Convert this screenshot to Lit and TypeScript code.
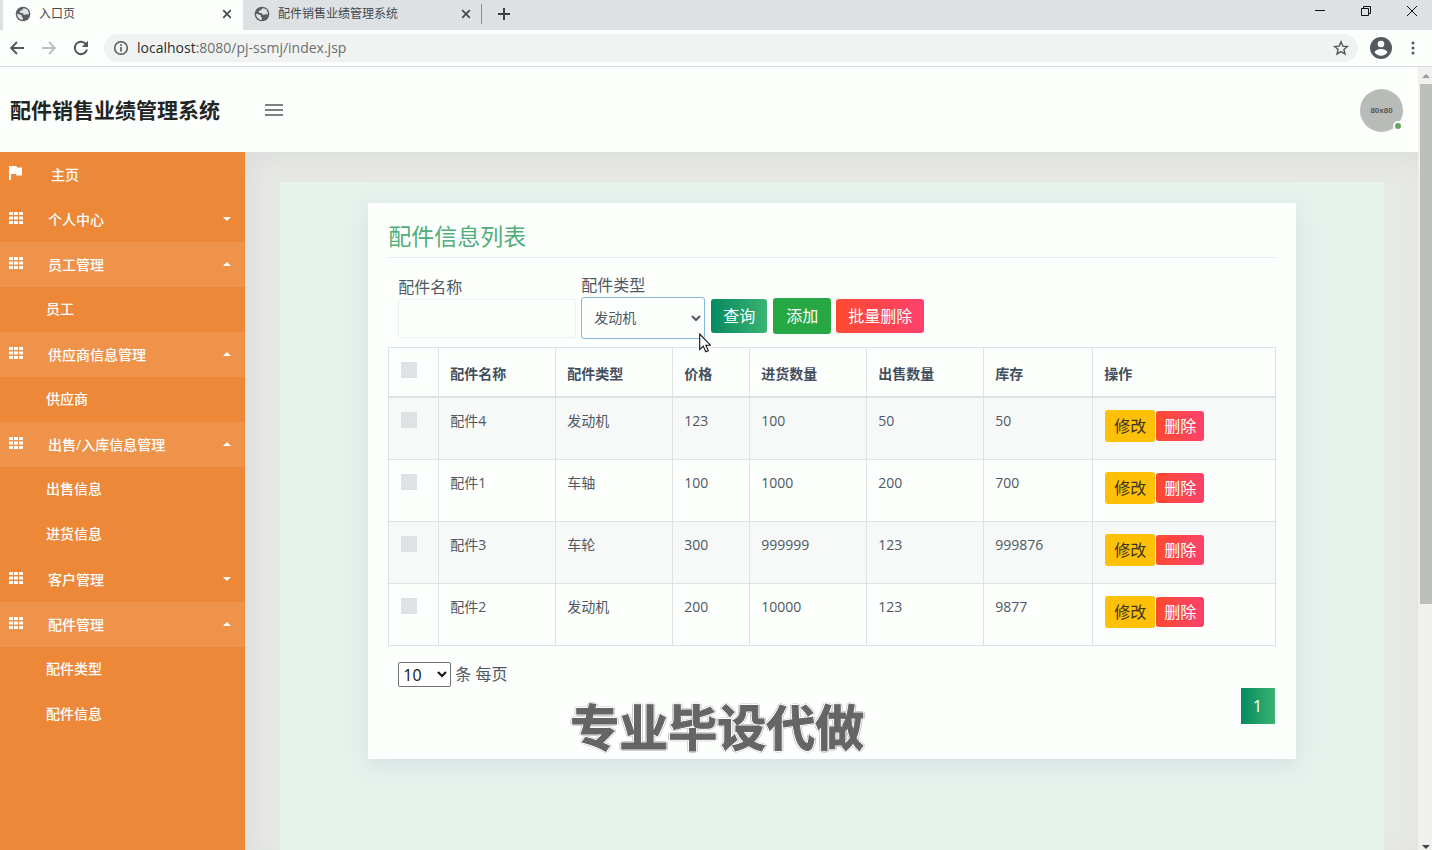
import { LitElement, html, css, svg } from "lit";
import { customElement } from "lit/decorators.js";
import { classMap } from "lit/directives/class-map.js";

const globe = html`<svg class="globe" viewBox="0 0 24 24" width="16" height="16" aria-hidden="true">
  <circle cx="12" cy="12" r="11" fill="#5a5e61" />
  <path d="M13 3.500c-2 .8-1 2.200-2.600 3-1.400.6-3.200.6-3.400 2.200-.2 1.700 2 1.700 3.700 1.900 1.900.3 1.300 2.300 3.200 2.500 2 .1 2.900-1.200 4.700-.8 1 .3 1.800 1 2 .2.700-4.600-2.600-9-7.600-9z" fill="#dfe3e5" />
  <path d="M3.200 11.500c1.800.2 4.300.8 6.200 2 1.500 1 .3 2.400 1.600 3.400 1 .8 1.300 2.300.6 3.900-4.600-.2-8.700-4.200-8.400-9.300z" fill="#dfe3e5" />
</svg>`;

const cross = html`<svg viewBox="0 0 10 10" width="10" height="10" aria-hidden="true">
  <path d="M1.200 1.200l7.600 7.600M8.800 1.200l-7.600 7.600" stroke="#45494c" stroke-width="1.700" />
</svg>`;

const gridIcon = html`<svg viewBox="0 0 14 12" width="14" height="12" aria-hidden="true">
  ${[0, 5, 10].map((x) => [0, 4.5, 9].map((y) => svg`<rect x=${x} y=${y} width="4" height="3" fill="#fff" />`))}
</svg>`;

const flagIcon = html`<svg viewBox="0 0 14 14" width="14" height="14" aria-hidden="true">
  <path d="M0 0h7.500l.5 1.600h5v8H7.500L7 8H2v6H0z" fill="#fff" />
</svg>`;

type MenuItem = { label: string; kind: "home" | "group" | "sub"; open?: boolean };

const menu: MenuItem[] = [
  { label: "主页", kind: "home" },
  { label: "个人中心", kind: "group" },
  { label: "员工管理", kind: "group", open: true },
  { label: "员工", kind: "sub" },
  { label: "供应商信息管理", kind: "group", open: true },
  { label: "供应商", kind: "sub" },
  { label: "出售/入库信息管理", kind: "group", open: true },
  { label: "出售信息", kind: "sub" },
  { label: "进货信息", kind: "sub" },
  { label: "客户管理", kind: "group" },
  { label: "配件管理", kind: "group", open: true },
  { label: "配件类型", kind: "sub" },
  { label: "配件信息", kind: "sub" },
];

@customElement("browser-bar")
class BrowserBar extends LitElement {
  static styles = css`
    :host { display: block; flex: none; font-family: "Open Sans", "Noto Sans CJK SC", sans-serif; color: #45494c; }
    * { box-sizing: border-box; }
    button { border: 0; padding: 0; background: none; display: flex; align-items: center; justify-content: center; font: inherit; }
    .strip { display: flex; height: 30px; background: #dde1e4; padding-left: 3px; overflow: hidden; }
    .tab { display: flex; align-items: center; width: 238px; padding: 0 10px 3px 11px; font-size: 12px; line-height: 18px; }
    .tab.active { width: 240px; padding-left: 12px; padding-right: 11px; background: #fdfffd; }
    .tab span { flex: 1; padding-left: 8px; }
    .sep { width: 1px; height: 20px; margin-top: 4px; background: #8d9194; }
    .plus { width: 44px; padding-bottom: 3px; }
    .window { margin-left: auto; margin-right: -3px; display: flex; }
    .window button { width: 46px; height: 22px; }
    .tools { display: flex; align-items: center; height: 37px; background: #fdfffd; border-bottom: 1px solid #d9dbda; }
    .nav { width: 32px; height: 32px; }
    .nav:first-child { margin-left: 1px; }
    .address { flex: 1; display: flex; align-items: center; height: 28px; margin-left: 7px; padding: 0 9px; border-radius: 14px; background: #f1f3f2; font-size: 14px; line-height: 20px; color: #6a6e70; }
    .url { flex: 1; padding-left: 8px; }
    .host { color: #2a2d2f; }
    .profile { width: 46px; }
    .more { width: 18px; margin-right: 10px; }
  `;
  render() {
    return html`
      <div class="strip">
        <div class="tab active">${globe}<span>入口页</span><button aria-label="关闭标签页">${cross}</button></div>
        <div class="tab">${globe}<span>配件销售业绩管理系统</span><button aria-label="关闭标签页">${cross}</button></div>
        <div class="sep"></div>
        <button class="plus" aria-label="新标签页">
          <svg viewBox="0 0 12 12" width="12" height="12"><path d="M6 0v12M0 6h12" stroke="#3c4043" stroke-width="2" /></svg>
        </button>
        <div class="window">
          <button aria-label="最小化"><svg viewBox="0 0 10 10" width="10" height="10"><path d="M0 4.500h10" stroke="#111" /></svg></button>
          <button aria-label="还原"><svg viewBox="0 0 10 10" width="10" height="10"><path d="M.5 2.500h7v7h-7zM2.500 2.500v-2h7v7h-2" fill="none" stroke="#111" /></svg></button>
          <button aria-label="关闭"><svg viewBox="0 0 10 10" width="10" height="10"><path d="M0 0l10 10M10 0L0 10" stroke="#111" /></svg></button>
        </div>
      </div>
      <div class="tools">
        <button class="nav" aria-label="后退"><svg viewBox="0 0 14 14" width="14" height="14"><path d="M14 7H1.500M7 1L1.200 7 7 13" fill="none" stroke="#54585b" stroke-width="1.900" /></svg></button>
        <button class="nav" aria-label="前进"><svg viewBox="0 0 14 14" width="14" height="14"><path d="M0 7h12.500M7 1l5.800 6L7 13" fill="none" stroke="#bcbfc0" stroke-width="1.900" /></svg></button>
        <button class="nav" aria-label="重新加载"><svg viewBox="0 0 16 16" width="16" height="16"><path d="M13.200 4.500A6.200 6.200 0 1 0 14 9.500" fill="none" stroke="#54585b" stroke-width="2" /><path d="M15 .8v6.200H8.800z" fill="#54585b" /></svg></button>
        <div class="address">
          <svg viewBox="0 0 16 16" width="16" height="16"><circle cx="8" cy="8" r="6.300" fill="none" stroke="#54585b" stroke-width="1.500" /><path d="M8 7v4.500M8 4.300v1.600" stroke="#54585b" stroke-width="1.600" /></svg>
          <span class="url"><span class="host">localhost</span>:8080/pj-ssmj/index.jsp</span>
          <svg viewBox="0 0 16 16" width="16" height="16"><path d="M8 1.800l1.800 4.300 4.600.4-3.500 3 1.100 4.600L8 11.600l-4 2.500 1.100-4.600-3.500-3 4.600-.4z" fill="none" stroke="#54585b" stroke-width="1.400" /></svg>
        </div>
        <button class="profile" aria-label="用户">
          <svg viewBox="0 0 22 22" width="22" height="22"><circle cx="11" cy="11" r="11" fill="#565a5d" /><circle cx="11" cy="7" r="3.300" fill="#fff" /><path d="M4.500 15.300c1-2.300 4-3.300 6.500-3.300s5.500 1 6.500 3.300c-1.500 2.200-3.900 3.400-6.500 3.400s-5-1.200-6.500-3.400z" fill="#fff" /></svg>
        </button>
        <button class="more" aria-label="菜单"><svg viewBox="0 0 4 14" width="4" height="14"><circle cx="2" cy="2" r="1.500" fill="#54585b" /><circle cx="2" cy="7" r="1.500" fill="#54585b" /><circle cx="2" cy="12" r="1.500" fill="#54585b" /></svg></button>
      </div>
    `;
  }
}

@customElement("side-menu")
class SideMenu extends LitElement {
  static styles = css`
    :host { display: block; flex: none; width: 245px; background: #ec8837; font-family: "Open Sans", "Noto Sans CJK SC", sans-serif; }
    .item { display: flex; align-items: center; height: 45px; box-sizing: border-box; padding: 0 14px 0 9px; color: #fff; font-size: 14px; font-weight: 500; line-height: 20px; text-decoration: none; }
    .open { background: #f0934a; }
    .icon { display: flex; padding-bottom: 3px; }
    .label { flex: 1; padding-left: 25px; }
    .home .label { padding-left: 28px; }
    .sub { padding-bottom: 2px; }
    .sub .label { padding-left: 37px; }
    .caret { border: 4px solid transparent; border-top-color: #fff; border-bottom: 0; margin-bottom: 2px; }
    .open .caret { border-top: 0; border-bottom: 4px solid #fff; }
  `;
  render() {
    return html`<nav>
      ${menu.map(
        (m) => html`<a href="#" class=${classMap({ item: true, [m.kind]: true, open: !!m.open })}>
          ${m.kind === "sub" ? "" : html`<span class="icon">${m.kind === "home" ? flagIcon : gridIcon}</span>`}
          <span class="label">${m.label}</span>
          ${m.kind === "group" ? html`<span class="caret"></span>` : ""}
        </a>`
      )}
    </nav>`;
  }
}

const rows = [
  ["配件4", "发动机", "123", "100", "50", "50"],
  ["配件1", "车轴", "100", "1000", "200", "700"],
  ["配件3", "车轮", "300", "999999", "123", "999876"],
  ["配件2", "发动机", "200", "10000", "123", "9877"],
];

@customElement("parts-card")
class PartsCard extends LitElement {
  static styles = css`
    :host { display: block; font-family: "Open Sans", "Noto Sans CJK SC", sans-serif; color: #4d5862; }
    * { box-sizing: border-box; }
    .card { position: relative; padding: 20px 20px 35px; background: #fdfffd; box-shadow: 0 6px 20px rgba(200, 212, 220, 0.55); }
    h3 { margin: 0 0 15px; padding-bottom: 8px; border-bottom: 1px solid #eceeed; font-size: 23px; font-weight: 400; line-height: 26px; color: #4fae78; }
    .filters { display: flex; align-items: center; gap: 5px; padding-left: 10px; margin-bottom: 8px; font-size: 16px; }
    .field { position: relative; display: flex; flex-direction: column; }
    .field label { line-height: 24px; }
    .field input { width: 178px; height: 39px; border: 1px solid #f0f2f1; border-radius: 2px; background: #fdfffd; font: inherit; }
    .field select { width: 124px; height: 42px; padding: 0 8px 2px; border: 1px solid #86b6e2; border-radius: 3px; background: #fdfffd; color: #4d5862; font-family: inherit; font-size: 14px; }
    .cursor { position: absolute; right: -6px; bottom: -14px; }
    button { border: 0; border-radius: 3px; font-family: inherit; font-size: 16px; line-height: 24px; color: #fff; }
    .filters button { height: 34px; margin-top: 20px; padding: 0 12px; }
    .filters .query { margin-left: 1px; }
    .filters .add { height: 36px; padding: 0 13px; margin-left: 1px; background: #28a745; }
    .query, .page { background: linear-gradient(to right, #058a60, #3bb371); }
    .danger { background: linear-gradient(to right, #fd4a30, #fd416c); }
    table { width: 100%; table-layout: fixed; border-collapse: collapse; font-size: 14px; line-height: 24px; }
    th, td { border: 1px solid #dfe2e2; padding: 11px 11px 12px; text-align: left; vertical-align: top; }
    th { height: 49px; border-bottom-width: 2px; color: #434e5c; font-weight: 600; padding-bottom: 10px; padding-top: 14px; }
    td { height: 62px; }
    tbody tr:nth-child(odd) { background: #f7f9f9; }
    .check { width: 50px; }
    .name { width: 117px; }
    .price { width: 77px; }
    .stock { width: 109px; }
    .ops { display: flex; align-items: center; gap: 1px; padding: 1px 0 0 1px; }
    .ops button { height: 30px; padding: 0 8px; }
    .ops .edit { height: 32px; padding: 0 9px; background: #ffc107; color: #3b3420; }
    input[type="checkbox"] { appearance: none; display: block; width: 16px; height: 16px; margin: 3px 0 0 1px; background: #dee2e5; }
    th input[type="checkbox"] { margin-top: 0; }
    .size { display: flex; align-items: center; gap: 4px; padding-left: 10px; margin: 16px 0 1px; font-size: 16px; line-height: 24px; }
    .size select { width: 53px; height: 25px; padding: 0; border: 1px solid #6f7173; border-radius: 2px; background: #fff; color: #111; font-family: inherit; font-size: 16px; }
    .pager { display: flex; justify-content: flex-end; }
    .page { width: 34px; height: 36px; margin-right: 1px; padding: 0; border-radius: 0; }
    .caption {
      position: absolute; left: 202px; bottom: 2px; margin: 0; font-size: 49px; line-height: 64px; font-weight: 700; color: #646664;
      font-family: "Noto Sans CJK SC", sans-serif; white-space: nowrap;
      -webkit-text-stroke: 1px #646664;
      text-shadow: 1px 0 #fff, -1px 0 #fff, 0 1px #fff, 0 -1px #fff, 1px 1px #fff, -1px -1px #fff, 1px -1px #fff, -1px 1px #fff,
        2px 0 #ccc, -2px 0 #ccc, 0 2px #ccc, 0 -2px #ccc, 2px 1px #ccc, -2px -1px #ccc, 2px -1px #ccc, -2px 1px #ccc;
    }
  `;
  render() {
    return html`<section class="card">
      <h3>配件信息列表</h3>
      <form class="filters">
        <div class="field"><label for="name">配件名称</label><input id="name" type="text" /></div>
        <div class="field">
          <label for="type">配件类型</label>
          <select id="type"><option>发动机</option></select>
          <svg class="cursor" viewBox="0 0 12 20" width="12" height="20" aria-hidden="true">
            <path d="M.7 1v15.500l3.600-3.400 2.400 5.700 2.600-1.100-2.400-5.500h4.600z" fill="#fff" stroke="#111" stroke-width="1.100" />
          </svg>
        </div>
        <button type="button" class="query">查询</button>
        <button type="button" class="add">添加</button>
        <button type="button" class="danger">批量删除</button>
      </form>
      <table>
        <thead>
          <tr>
            <th class="check"><input type="checkbox" aria-label="全选" /></th>
            <th class="name">配件名称</th>
            <th class="name">配件类型</th>
            <th class="price">价格</th>
            <th class="name">进货数量</th>
            <th class="name">出售数量</th>
            <th class="stock">库存</th>
            <th>操作</th>
          </tr>
        </thead>
        <tbody>
          ${rows.map(
            (r) => html`<tr>
              <td><input type="checkbox" aria-label=${r[0]} /></td>
              ${r.map((c) => html`<td>${c}</td>`)}
              <td><div class="ops"><button class="edit">修改</button><button class="danger">删除</button></div></td>
            </tr>`
          )}
        </tbody>
      </table>
      <div class="size">
        <select id="size" aria-label="每页条数"><option>10</option></select>
        <label for="size">条 每页</label>
      </div>
      <div class="pager"><button class="page">1</button></div>
      <p class="caption">专业毕设代做</p>
    </section>`;
  }
}

@customElement("app-root")
class AppRoot extends LitElement {
  static styles = css`
    :host { display: flex; flex-direction: column; height: 100vh; overflow: hidden; font-family: "Open Sans", "Noto Sans CJK SC", sans-serif; }
    * { box-sizing: border-box; }
    .view { flex: 1; display: flex; min-height: 0; }
    .site { flex: 1; display: flex; flex-direction: column; min-width: 0; }
    header { flex: none; display: flex; align-items: center; height: 85px; padding: 1px 15px 0 10px; background: #fdfffd; }
    h1 { margin: 0; width: 255px; font-size: 21px; font-weight: 700; line-height: 32px; color: #222523; }
    .burger { display: flex; padding: 0; border: 0; background: none; }
    .avatar { position: relative; display: flex; align-items: center; justify-content: center; width: 43px; height: 43px; margin-left: auto; border-radius: 50%; background: #b9bbb9; font-family: "Liberation Sans", sans-serif; font-size: 8px; font-weight: 700; color: #555; }
    .online { position: absolute; right: 0; bottom: 1px; width: 10px; height: 10px; border: 2px solid #fdfffd; border-radius: 50%; background: #68a565; }
    .body { flex: 1; display: flex; min-height: 0; }
    main { flex: 1; display: flex; padding: 30px 34px 0 35px; background: #e7e9e6; box-shadow: inset 8px 8px 24px #dcdedc; }
    .panel { flex: 1; padding: 21px 8% 0; background: #e6f2ec; }
    .scroll { flex: none; display: flex; flex-direction: column; align-items: center; width: 14px; padding: 7px 0 1px 2px; background: #f0f1ef; }
    .rail { flex: 1; align-self: stretch; padding: 6px 0 8px; }
    .thumb { height: 69%; background: #bcbebb; }
    .arrow { border: 4px solid transparent; border-bottom-color: #999; border-top: 0; }
    .arrow.down { border-bottom: 0; border-top: 4px solid #444; }
  `;
  render() {
    return html`
      <browser-bar></browser-bar>
      <div class="view">
        <div class="site">
          <header>
            <h1>配件销售业绩管理系统</h1>
            <button class="burger" aria-label="切换菜单">
              <svg viewBox="0 0 18 12" width="18" height="12"><path d="M0 1h18M0 6h18M0 11h18" stroke="#7f8280" stroke-width="1.800" /></svg>
            </button>
            <div class="avatar">80x80<span class="online"></span></div>
          </header>
          <div class="body">
            <side-menu></side-menu>
            <main><div class="panel"><parts-card></parts-card></div></main>
          </div>
        </div>
        <div class="scroll">
          <span class="arrow"></span>
          <div class="rail"><div class="thumb"></div></div>
          <span class="arrow down"></span>
        </div>
      </div>
    `;
  }
}
